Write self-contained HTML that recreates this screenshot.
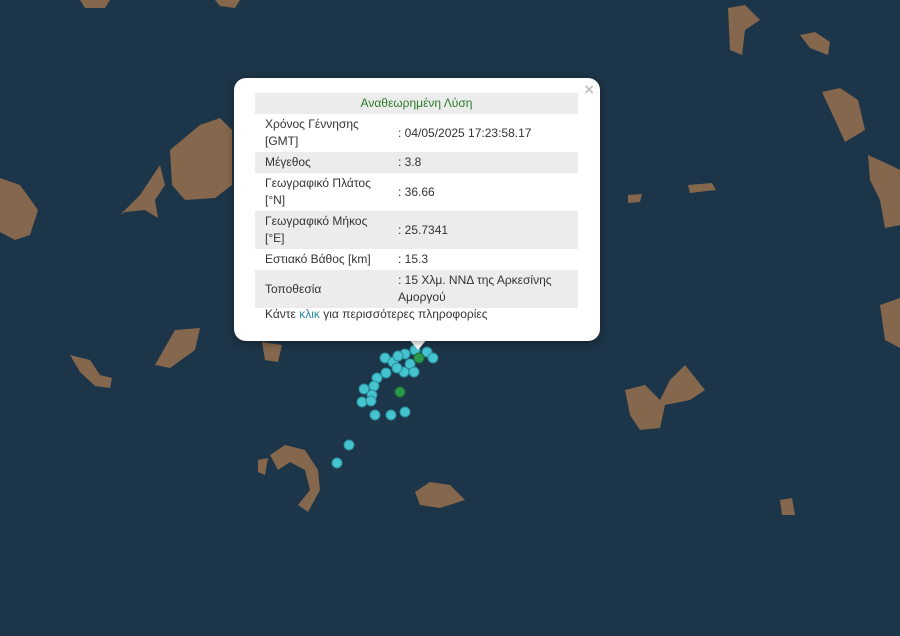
<!DOCTYPE html>
<html><head><meta charset="utf-8"><style>
html,body{margin:0;padding:0;width:900px;height:636px;overflow:hidden;background:#1d3548;font-family:"Liberation Sans",sans-serif}
svg{position:absolute;left:0;top:0}
.pop{position:absolute;left:234px;top:78px;width:366px;height:263px;background:#fff;border-radius:12px;box-shadow:0 2px 8px rgba(0,0,0,.4)}
.tip{position:absolute;left:408px;top:338px;width:0;height:0;border-left:10px solid transparent;border-right:10px solid transparent;border-top:12px solid #fff}
.x{position:absolute;right:6px;top:2px;color:#c3c3c3;font-size:17px;font-weight:bold}
table{position:absolute;left:21px;top:15px;width:323px;border-collapse:collapse;font-size:12px;color:#333;line-height:17px}
td{padding:2px 10px;vertical-align:middle}
td.v{padding-left:4px}
tr.g{background:#ececec}
.h{text-align:center;color:#2a7a2a}
.lnk{position:absolute;left:31px;top:229px;font-size:12px;color:#333}
.lnk span{color:#2a8aa0}
</style></head><body>
<svg width="900" height="636">
<g fill="#84674c">
<path d="M0 178 L20 185 L38 210 L30 235 L15 240 L0 232Z"/>
<path d="M170 150 L200 125 L220 118 L232 130 L232 185 L215 198 L185 200 L172 185Z"/>
<path d="M120 215 L140 195 L160 165 L165 185 L155 200 L158 218 L145 210 L125 212Z"/>
<path d="M155 365 L175 330 L200 328 L195 350 L170 368Z"/>
<path d="M70 355 L90 360 L100 375 L112 378 L110 388 L95 386 L80 372Z"/>
<path d="M262 342 L282 345 L278 362 L265 360Z"/>
<path d="M728 8 L745 5 L760 20 L745 30 L742 55 L730 50Z"/>
<path d="M800 35 L815 32 L830 42 L828 55 L810 48Z"/>
<path d="M822 92 L840 88 L858 100 L865 130 L845 142 L835 120Z"/>
<path d="M868 155 L890 165 L900 170 L900 225 L885 228 L880 200 L870 180Z"/>
<path d="M688 185 L712 183 L716 190 L690 193Z"/>
<path d="M628 195 L642 194 L640 202 L628 203Z"/>
<path d="M880 305 L900 298 L900 348 L885 340Z"/>
<path d="M625 390 L645 385 L660 400 L670 380 L685 365 L705 390 L690 400 L665 405 L660 428 L640 430 L630 415Z"/>
<path d="M415 492 L430 482 L450 485 L465 500 L440 508 L420 505Z"/>
<path d="M270 455 L285 445 L305 450 L318 470 L320 490 L308 512 L298 505 L310 490 L305 470 L290 462 L278 470Z"/>
<path d="M258 460 L268 458 L265 475 L258 472Z"/>
<path d="M780 500 L792 498 L795 515 L782 515Z"/>
<path d="M80 0 L110 0 L105 8 L85 8Z"/>
<path d="M215 0 L240 0 L235 8 L220 6Z"/>
</g>
<g fill="#45c4d0" stroke="#2a8c98" stroke-width="1">
<circle cx="405" cy="354" r="5"/><circle cx="415" cy="350" r="5"/><circle cx="427" cy="352" r="5"/><circle cx="433" cy="358" r="5"/>
<circle cx="385" cy="358" r="5"/><circle cx="393" cy="362" r="5"/><circle cx="398" cy="356" r="5"/><circle cx="410" cy="364" r="5"/>
<circle cx="414" cy="372" r="5"/><circle cx="404" cy="372" r="5"/><circle cx="386" cy="373" r="5"/><circle cx="377" cy="378" r="5"/>
<circle cx="364" cy="389" r="5"/><circle cx="374" cy="386" r="5"/><circle cx="372" cy="395" r="5"/><circle cx="362" cy="402" r="5"/>
<circle cx="371" cy="401" r="5"/><circle cx="375" cy="415" r="5"/><circle cx="391" cy="415" r="5"/><circle cx="405" cy="412" r="5"/>
<circle cx="349" cy="445" r="5"/><circle cx="337" cy="463" r="5"/><circle cx="397" cy="368" r="5"/>
</g>
<g fill="#2a9a4a" stroke="#1d7036" stroke-width="1"><circle cx="400" cy="392" r="5"/><circle cx="419" cy="358" r="5"/></g>
</svg>
<div class="tip"></div>
<div class="pop">
<div class="x">×</div>
<table>
<tr class="g"><td colspan="2" class="h">Αναθεωρημένη Λύση</td></tr>
<tr><td style="width:119px">Χρόνος Γέννησης<br>[GMT]</td><td class="v">: 04/05/2025 17:23:58.17</td></tr>
<tr class="g"><td>Μέγεθος</td><td class="v">: 3.8</td></tr>
<tr><td>Γεωγραφικό Πλάτος<br>[°N]</td><td class="v">: 36.66</td></tr>
<tr class="g"><td>Γεωγραφικό Μήκος<br>[°E]</td><td class="v">: 25.7341</td></tr>
<tr><td>Εστιακό Βάθος [km]</td><td class="v">: 15.3</td></tr>
<tr class="g"><td>Τοποθεσία</td><td class="v">: 15 Χλμ. ΝΝΔ της Αρκεσίνης Αμοργού</td></tr>
</table>
<div class="lnk">Κάντε <span>κλικ</span> για περισσότερες πληροφορίες</div>
</div>
</body></html>
